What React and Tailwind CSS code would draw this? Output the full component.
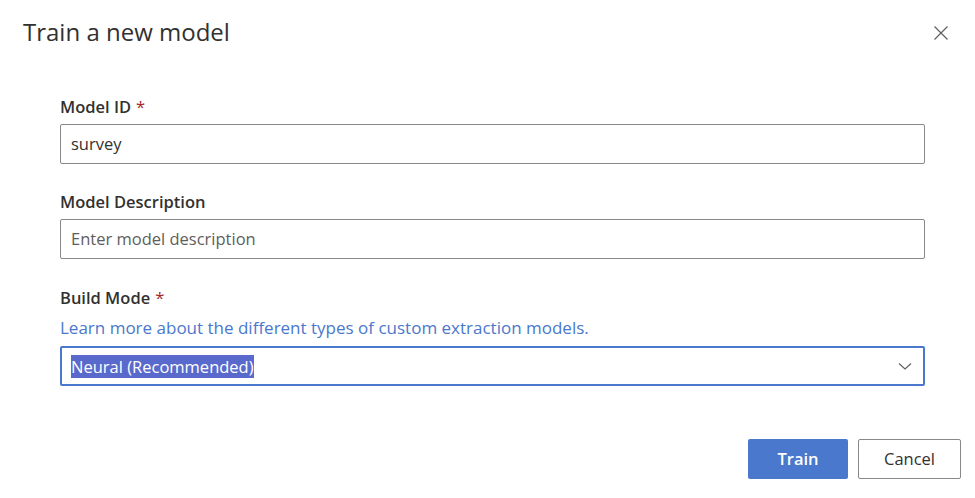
import React from 'react';

function Label({ children, required }) {
  return (
    <div className="text-[16.5px] leading-[22px] font-semibold text-[#323130] mb-[6px]">
      {children}
      {required && <span className="text-[#a4262c] font-normal ml-[5px]">*</span>}
    </div>
  );
}

export default function App() {
  return (
    <div
      className="w-[975px] h-[498px] bg-white flex flex-col text-[#323130]"
      style={{ fontFamily: '"Open Sans", "Noto Sans", sans-serif' }}
    >
      <div className="flex items-start justify-between pl-[23px] pr-[26px] pt-[16px]">
        <h1 className="text-[24px] leading-[32px] font-normal">Train a new model</h1>
        <button className="mt-[9px] w-[16px] h-[16px] flex items-center justify-center text-[#605e5c]">
          <svg width="16" height="16" viewBox="0 0 16 16" fill="none" stroke="currentColor" strokeWidth="1.2">
            <path d="M1.5 1.5 L14.5 14.5 M14.5 1.5 L1.5 14.5" />
          </svg>
        </button>
      </div>

      <div className="flex flex-col pl-[60px] pr-[50px] pt-[48px]">
        <Label required>Model ID</Label>
        <div className="h-[40px] border border-[#8a8886] rounded-[2px] flex items-center px-[10px] text-[16.5px]">
          survey
        </div>

        <div className="mt-[27px]">
          <Label>Model Description</Label>
        </div>
        <div className="h-[40px] border border-[#8a8886] rounded-[2px] flex items-center px-[10px] text-[16.5px] text-[#605e5c]">
          Enter model description
        </div>

        <div className="mt-[28px]">
          <Label required>Build Mode</Label>
        </div>
        <a className="text-[17px] leading-[24px] text-[#4a78cc] mt-[1px] mb-[6px]">
          Learn more about the different types of custom extraction models.
        </a>
        <div className="h-[40px] border-2 border-[#4a78cc] rounded-[2px] flex items-center justify-between pl-[9px] pr-[10px] text-[16.5px]">
          <span className="bg-[#5a6acc] text-white leading-[23px]">Neural (Recommended)</span>
          <svg width="16" height="16" viewBox="0 0 16 16" fill="none" stroke="#605e5c" strokeWidth="1.1">
            <path d="M2 5.5 L8 11 L14 5.5" />
          </svg>
        </div>
      </div>

      <div className="flex justify-end gap-[10px] pr-[14px] mt-[53px]">
        <button className="w-[100px] h-[40px] rounded-[2px] bg-[#4a78cc] text-white text-[16.5px] font-semibold">
          Train
        </button>
        <button className="w-[103px] h-[40px] rounded-[2px] border border-[#8a8886] bg-white text-[#323130] text-[16.5px]">
          Cancel
        </button>
      </div>
    </div>
  );
}
